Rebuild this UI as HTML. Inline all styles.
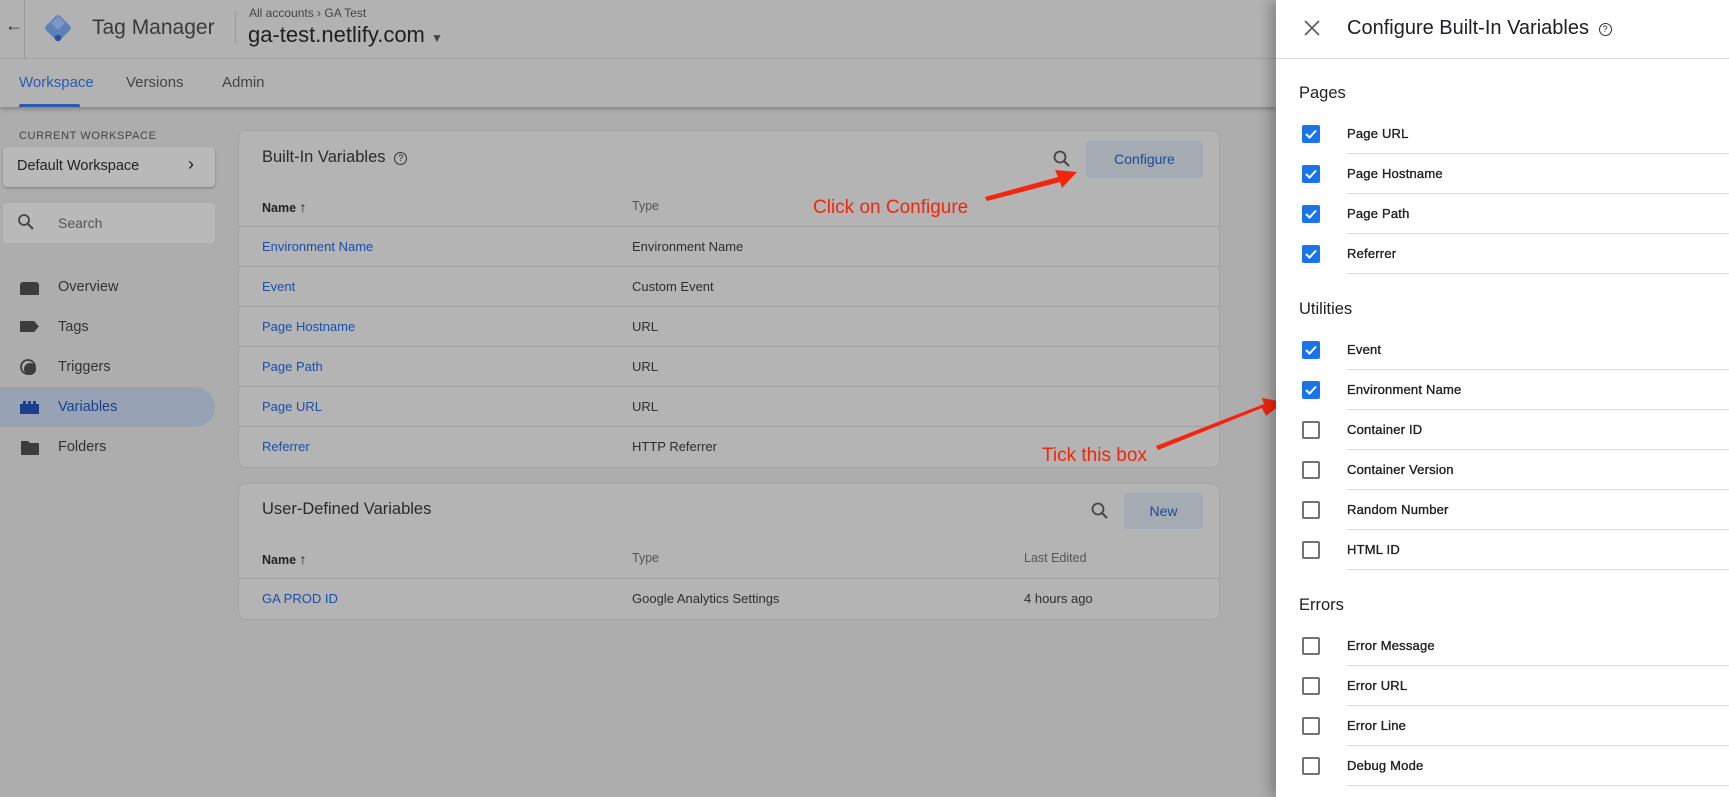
<!DOCTYPE html>
<html><head><meta charset="utf-8"><style>
*{margin:0;padding:0;box-sizing:border-box}
body{width:1729px;height:797px;overflow:hidden;background:#adadad;font-family:"Liberation Sans",Arial,sans-serif;position:relative;color:#2b2b2b}
.a{position:absolute;white-space:nowrap}
.hdr{position:absolute;left:0;top:0;width:1276px;height:107px;background:#b2b2b2;box-shadow:0 2px 4px rgba(0,0,0,.25)}
.card{position:absolute;background:#b4b4b4;border:1px solid #a3a3a3;border-radius:8px}
.line{position:absolute;height:1px;background:#a0a0a0}
.lnk{color:#1a4fa8;font-size:13px}
.t13{font-size:13px;color:#2e2e2e}
.btn{position:absolute;background:#a5abb3;border-radius:4px;color:#1a4a9a;font-size:14px;text-align:center}
.panel{position:absolute;left:1276px;top:0;width:453px;height:797px;background:#fff;box-shadow:-6px 0 12px rgba(0,0,0,.25)}
.cb{position:absolute;left:26px;width:18px;height:18px;border-radius:2px}
.on{background:#1a73e8}
.off{border:2px solid #6f7378}
.lab{position:absolute;left:71px;font-size:13px;color:#202124;letter-spacing:.2px;-webkit-text-stroke:0.35px #202124}
.pl{position:absolute;left:71px;right:0;height:1px;background:#dadce0}
.sec{position:absolute;left:23px;font-size:16.5px;color:#202124}
.nav{position:absolute;left:58px;font-size:14.5px;color:#333}
.red{color:#f3250d;font-size:19px}
</style></head><body>
<div class="hdr"></div>
<div class="a" style="left:5px;top:15px;font-size:18px;color:#333">←</div>
<div class="a" style="left:24px;top:0;width:1px;height:58px;background:#999"></div>
<svg class="a" style="left:42px;top:12px" width="32" height="32" viewBox="0 0 32 32"><rect x="6" y="6" width="20" height="20" transform="rotate(45 16 16)" rx="3" fill="#5f7fb8"/><path d="M16 4 L9 11 L16 18 L23 11Z" fill="#7d97c6"/><circle cx="16" cy="26" r="3.2" fill="#2b4f99"/></svg>
<div class="a" style="left:92px;top:16px;font-size:21px;color:#3a3a3a">Tag Manager</div>
<div class="a" style="left:235px;top:11px;width:1px;height:33px;background:#999"></div>
<div class="a" style="left:249px;top:6px;font-size:12px;color:#444">All accounts › GA Test</div>
<div class="a" style="left:248px;top:22px;font-size:22px;color:#1f1f1f">ga-test.netlify.com <span style="font-size:12px;color:#444">▼</span></div>
<div class="a" style="left:0;top:58px;width:1276px;height:1px;background:#9f9f9f"></div>
<div class="a" style="left:19px;top:74px;font-size:15px;color:#2a5cb0">Workspace</div>
<div class="a" style="left:126px;top:74px;font-size:15px;color:#444">Versions</div>
<div class="a" style="left:222px;top:74px;font-size:15px;color:#444">Admin</div>
<div class="a" style="left:19px;top:104px;width:61px;height:3px;background:#2a5cb0;border-radius:2px 2px 0 0"></div>

<div class="a" style="left:19px;top:130px;font-size:11px;color:#444;letter-spacing:.6px">CURRENT WORKSPACE</div>
<div class="a" style="left:3px;top:147px;width:212px;height:40px;background:#b9b9b9;border-radius:4px;box-shadow:0 1px 2px rgba(0,0,0,.3)"></div>
<div class="a" style="left:17px;top:158px;font-size:14.5px;color:#222">Default Workspace</div>
<div class="a" style="left:188px;top:154px;font-size:18px;color:#222">›</div>
<div class="a" style="left:3px;top:203px;width:212px;height:40px;background:#b9b9b9;border-radius:4px"></div>
<svg class="a" style="left:17px;top:213px" width="18" height="18" viewBox="0 0 18 18"><circle cx="7" cy="7" r="5" stroke="#444" stroke-width="1.8" fill="none"/><path d="M11 11 L16 16" stroke="#444" stroke-width="2"/></svg>
<div class="a" style="left:58px;top:215px;font-size:14px;color:#555">Search</div>

<div class="a" style="left:0;top:387px;width:215px;height:40px;background:#97a3b5;border-radius:0 20px 20px 0"></div>
<div class="a" style="left:20px;top:282px;width:19px;height:13px;background:#3d3d3d;border-radius:3px 3px 1px 1px"></div>
<svg class="a" style="left:20px;top:321px" width="20" height="11"><path d="M0 0H14L19 5.5L14 11H0Z" fill="#3d3d3d"/></svg>
<svg class="a" style="left:19px;top:358px" width="20" height="20"><circle cx="9" cy="9" r="7" stroke="#3d3d3d" stroke-width="1.8" fill="none"/><circle cx="11" cy="11" r="6" fill="#3d3d3d"/></svg>
<svg class="a" style="left:20px;top:401px" width="20" height="13"><path d="M0 3H3V0H6V3H8V0H11V3H13V0H16V3H19V13H0Z" fill="#1b3f8f"/></svg>
<svg class="a" style="left:21px;top:441px" width="18" height="14"><path d="M0 1Q0 0 1 0H7L9 2H17Q18 2 18 3V13Q18 14 17 14H1Q0 14 0 13Z" fill="#3d3d3d"/></svg>
<div class="nav" style="top:279px">Overview</div>
<div class="nav" style="top:319px">Tags</div>
<div class="nav" style="top:359px">Triggers</div>
<div class="nav" style="top:399px;color:#1b3f8f">Variables</div>
<div class="nav" style="top:439px">Folders</div>

<div class="card" style="left:238px;top:130px;width:982px;height:338px"></div>
<div class="a" style="left:262px;top:148px;font-size:16.5px;color:#2a2a2a">Built-In Variables <span style="display:inline-block;width:13px;height:13px;border:1.6px solid #333;border-radius:50%;font-size:9px;text-align:center;line-height:10px;vertical-align:1px;margin-left:4px">?</span></div>
<svg class="a" style="left:1052px;top:149px" width="20" height="20" viewBox="0 0 20 20"><circle cx="8" cy="8" r="5.5" stroke="#444" stroke-width="1.8" fill="none"/><path d="M12 12 L17 17" stroke="#444" stroke-width="2"/></svg>
<div class="btn" style="left:1086px;top:141px;width:117px;height:37px;line-height:37px">Configure</div>
<div class="a" style="left:262px;top:199px;font-size:12.5px;color:#222;font-weight:bold">Name <span style="font-weight:normal;font-size:14px">↑</span></div>
<div class="a" style="left:632px;top:199px;font-size:12.5px;color:#555">Type</div>
<div class="line" style="left:239px;top:226px;width:980px"></div>
<div class="line" style="left:239px;top:266px;width:980px"></div>
<div class="line" style="left:239px;top:306px;width:980px"></div>
<div class="line" style="left:239px;top:346px;width:980px"></div>
<div class="line" style="left:239px;top:386px;width:980px"></div>
<div class="line" style="left:239px;top:426px;width:980px"></div>
<div class="a lnk" style="left:262px;top:239px">Environment Name</div><div class="a t13" style="left:632px;top:239px">Environment Name</div>
<div class="a lnk" style="left:262px;top:279px">Event</div><div class="a t13" style="left:632px;top:279px">Custom Event</div>
<div class="a lnk" style="left:262px;top:319px">Page Hostname</div><div class="a t13" style="left:632px;top:319px">URL</div>
<div class="a lnk" style="left:262px;top:359px">Page Path</div><div class="a t13" style="left:632px;top:359px">URL</div>
<div class="a lnk" style="left:262px;top:399px">Page URL</div><div class="a t13" style="left:632px;top:399px">URL</div>
<div class="a lnk" style="left:262px;top:439px">Referrer</div><div class="a t13" style="left:632px;top:439px">HTTP Referrer</div>

<div class="card" style="left:238px;top:483px;width:982px;height:137px"></div>
<div class="a" style="left:262px;top:500px;font-size:16.5px;color:#2a2a2a">User-Defined Variables</div>
<svg class="a" style="left:1090px;top:501px" width="20" height="20" viewBox="0 0 20 20"><circle cx="8" cy="8" r="5.5" stroke="#444" stroke-width="1.8" fill="none"/><path d="M12 12 L17 17" stroke="#444" stroke-width="2"/></svg>
<div class="btn" style="left:1124px;top:493px;width:79px;height:36px;line-height:36px">New</div>
<div class="a" style="left:262px;top:551px;font-size:12.5px;color:#222;font-weight:bold">Name <span style="font-weight:normal;font-size:14px">↑</span></div>
<div class="a" style="left:632px;top:551px;font-size:12.5px;color:#555">Type</div>
<div class="a" style="left:1024px;top:551px;font-size:12.5px;color:#555">Last Edited</div>
<div class="line" style="left:239px;top:578px;width:980px"></div>
<div class="a lnk" style="left:262px;top:591px">GA PROD ID</div>
<div class="a t13" style="left:632px;top:591px">Google Analytics Settings</div>
<div class="a t13" style="left:1024px;top:591px">4 hours ago</div>

<div class="a red" style="left:813px;top:197px">Click on Configure</div>
<div class="a red" style="left:1042px;top:445px">Tick this box</div>
<svg class="a" style="left:0;top:0" width="1729" height="797"><path d="M985 197 L1058 177 L1055 170 L1077 172 L1062 188 L1060 182 L987 201Z" fill="#f3250d"/><path d="M1158 450 L1262 408 L1266 416 L1284 402 L1262 398 L1264 404 L1156 446Z" fill="#f3250d"/></svg>

<div class="panel">
<svg class="a" style="left:28px;top:20px" width="16" height="16"><path d="M1 1L15 15M15 1L1 15" stroke="#5f6368" stroke-width="1.8"/></svg>
<div class="a" style="left:71px;top:17px;font-size:20px;color:#202124">Configure Built-In Variables <span style="display:inline-block;width:13px;height:13px;border:1.6px solid #333;border-radius:50%;font-size:9px;text-align:center;line-height:10px;vertical-align:2px;margin-left:4px">?</span></div>
<div class="a" style="left:0;top:58px;width:453px;height:1px;background:#dadce0"></div>
<div class="sec" style="top:84px">Pages</div>
<div class="sec" style="top:300px">Utilities</div>
<div class="sec" style="top:596px">Errors</div>
</div>
<style>
.r{position:absolute;left:1276px;width:453px;height:40px}
</style>
<div class="r" style="top:114px"><div class="cb on" style="top:11px"></div><div class="lab" style="top:12px">Page URL</div><div class="pl" style="top:39px"></div></div>
<div class="r" style="top:154px"><div class="cb on" style="top:11px"></div><div class="lab" style="top:12px">Page Hostname</div><div class="pl" style="top:39px"></div></div>
<div class="r" style="top:194px"><div class="cb on" style="top:11px"></div><div class="lab" style="top:12px">Page Path</div><div class="pl" style="top:39px"></div></div>
<div class="r" style="top:234px"><div class="cb on" style="top:11px"></div><div class="lab" style="top:12px">Referrer</div><div class="pl" style="top:39px"></div></div>
<div class="r" style="top:330px"><div class="cb on" style="top:11px"></div><div class="lab" style="top:12px">Event</div><div class="pl" style="top:39px"></div></div>
<div class="r" style="top:370px"><div class="cb on" style="top:11px"></div><div class="lab" style="top:12px">Environment Name</div><div class="pl" style="top:39px"></div></div>
<div class="r" style="top:410px"><div class="cb off" style="top:11px"></div><div class="lab" style="top:12px">Container ID</div><div class="pl" style="top:39px"></div></div>
<div class="r" style="top:450px"><div class="cb off" style="top:11px"></div><div class="lab" style="top:12px">Container Version</div><div class="pl" style="top:39px"></div></div>
<div class="r" style="top:490px"><div class="cb off" style="top:11px"></div><div class="lab" style="top:12px">Random Number</div><div class="pl" style="top:39px"></div></div>
<div class="r" style="top:530px"><div class="cb off" style="top:11px"></div><div class="lab" style="top:12px">HTML ID</div><div class="pl" style="top:39px"></div></div>
<div class="r" style="top:626px"><div class="cb off" style="top:11px"></div><div class="lab" style="top:12px">Error Message</div><div class="pl" style="top:39px"></div></div>
<div class="r" style="top:666px"><div class="cb off" style="top:11px"></div><div class="lab" style="top:12px">Error URL</div><div class="pl" style="top:39px"></div></div>
<div class="r" style="top:706px"><div class="cb off" style="top:11px"></div><div class="lab" style="top:12px">Error Line</div><div class="pl" style="top:39px"></div></div>
<div class="r" style="top:746px"><div class="cb off" style="top:11px"></div><div class="lab" style="top:12px">Debug Mode</div><div class="pl" style="top:39px"></div></div>
<svg class="a" style="left:0;top:0;pointer-events:none" width="1729" height="797"><g fill="none" stroke="#fff" stroke-width="2"><path d="M1306 134l3.5 3.5 6.5-7"/><path d="M1306 174l3.5 3.5 6.5-7"/><path d="M1306 214l3.5 3.5 6.5-7"/><path d="M1306 254l3.5 3.5 6.5-7"/><path d="M1306 350l3.5 3.5 6.5-7"/><path d="M1306 390l3.5 3.5 6.5-7"/></g></svg>
</body></html>
